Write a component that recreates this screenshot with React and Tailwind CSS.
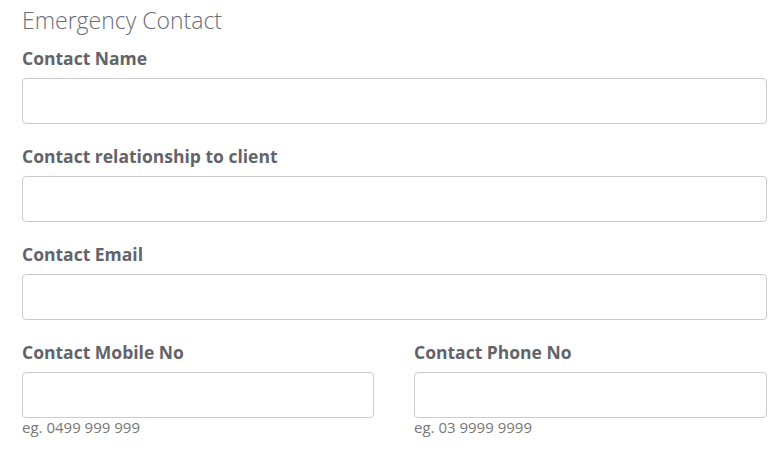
import React from 'react';

const Field = ({ label, hint, className = '' }) => (
  <div className={`flex flex-col ${className}`}>
    <label className="text-[17.5px] leading-[24px] font-bold text-[#63636a]">{label}</label>
    <input
      type="text"
      className="mt-[8px] h-[46px] w-full rounded-[4px] border border-[#ccc] bg-white px-3 outline-none"
    />
    {hint && <span className="text-[15px] leading-[18px] text-[#777]">{hint}</span>}
  </div>
);

export default function App() {
  return (
    <div
      className="min-h-[454px] w-[784px] bg-white pl-[22px] pr-[17px] pt-[4px]"
      style={{ fontFamily: '"Open Sans", sans-serif' }}
    >
      <h2 className="text-[23px] leading-[32px] font-light text-[#6b6b78]">Emergency Contact</h2>
      <div className="mt-[10px] flex flex-col gap-[20px]">
        <Field label="Contact Name" />
        <Field label="Contact relationship to client" />
        <Field label="Contact Email" />
        <div className="flex gap-[40px]">
          <Field label="Contact Mobile No" hint="eg. 0499 999 999" className="w-[352px]" />
          <Field label="Contact Phone No" hint="eg. 03 9999 9999" className="flex-1" />
        </div>
      </div>
    </div>
  );
}
